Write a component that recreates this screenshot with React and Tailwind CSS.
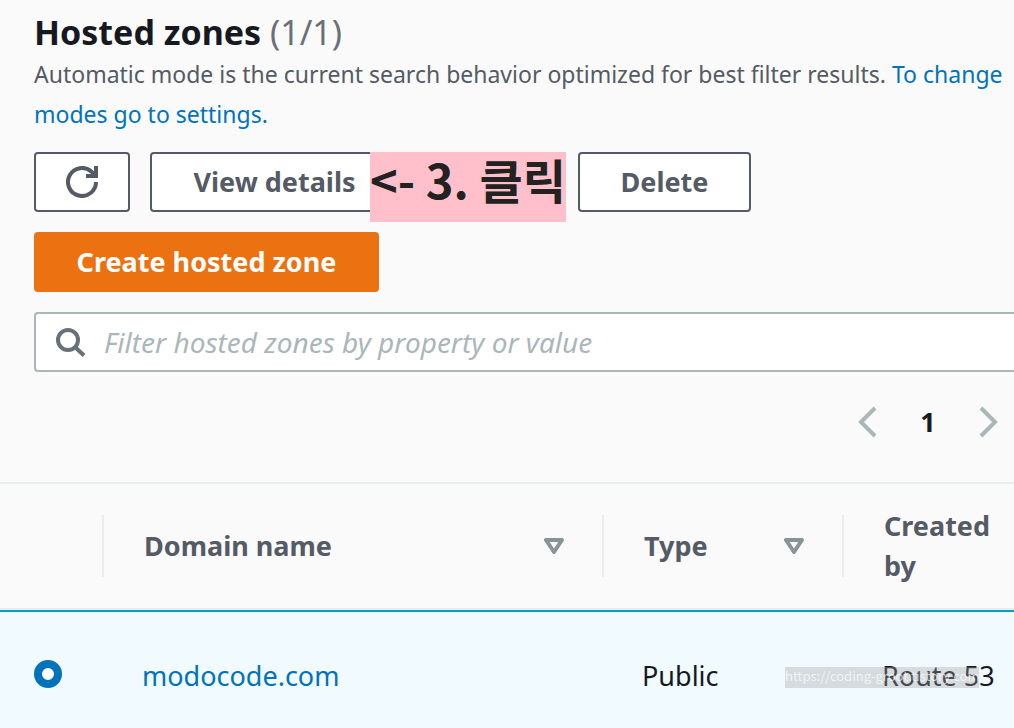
import { useState } from 'react';

const ZONES = [{ name: 'modocode.com', type: 'Public', createdBy: 'Route 53' }];

const BUTTON = 'h-[60px] shrink-0 rounded border-2 border-[#545b64] bg-white text-[27px] font-bold text-[#545b64]';

function RefreshIcon() {
  return (
    <svg className="mx-auto h-8 w-8" viewBox="0 0 32 32" fill="none" stroke="currentColor" strokeWidth="4" aria-hidden="true">
      <path d="M30 16a14 14 0 1 1-4.500-10.300l3 3" />
      <path d="M20 10h10V0" />
    </svg>
  );
}

function SearchIcon() {
  return (
    <svg className="h-8 w-8 shrink-0 text-[#687078]" viewBox="0 0 32 32" fill="none" stroke="currentColor" strokeWidth="4" aria-hidden="true">
      <circle cx="14" cy="14" r="10" />
      <path d="M21 21l9 8.500" />
    </svg>
  );
}

function Chevron({ d }) {
  return (
    <svg className="h-8 w-5" viewBox="0 0 20 32" fill="none" stroke="#aab7b8" strokeWidth="4" aria-hidden="true">
      <path d={d} />
    </svg>
  );
}

function SortIcon() {
  return (
    <svg className="h-4 w-5" viewBox="0 0 20 16" fill="none" stroke="#879596" strokeWidth="4" strokeLinejoin="round" aria-hidden="true">
      <path d="M2 2h16l-8 12z" />
    </svg>
  );
}

function HeaderCell({ label, sortable }) {
  return (
    <th scope="col" className="border-b-2 border-[#eaeded] p-0 text-left font-bold">
      <div className="flex h-[62px] items-center justify-between border-l-2 border-[#eaeded] pr-[38px] pl-10">
        <span>{label}</span>
        {sortable && (
          <button type="button" aria-label={`Sort by ${label}`}>
            <SortIcon />
          </button>
        )}
      </div>
    </th>
  );
}

export default function App() {
  const [filter, setFilter] = useState('');
  const [selected, setSelected] = useState('modocode.com');

  return (
    <div className="min-h-screen overflow-hidden bg-[#fafafa] font-['Noto_Sans',sans-serif] text-[#16191f]">
      <header className="pl-[34px]">
        <h1 className="pt-[10px] text-[34px] leading-[44px] font-bold">
          Hosted zones <span className="font-normal text-[#687078]">(1/1)</span>
        </h1>
        <p className="text-[23px] leading-10 text-[#545b64]">
          Automatic mode is the current search behavior optimized for best filter results.{' '}
          <a href="#settings" className="text-[#0073bb]">To change modes go to settings.</a>
        </p>

        <div className="mt-[18px] flex gap-5">
          <button type="button" aria-label="Refresh" className={`${BUTTON} w-24`}>
            <RefreshIcon />
          </button>
          <button type="button" className={`${BUTTON} w-[249px]`}>View details</button>
          <div className="relative w-[139px] shrink-0">
            <div className="absolute top-0 -left-[49px] h-[70px] w-[196px] bg-[#ffc0cb] font-['Noto_Sans_CJK_KR',sans-serif] text-[47px] leading-[54px] font-bold whitespace-nowrap text-[#222]">
              &lt;- 3. 클릭
            </div>
          </div>
          <button type="button" className={`${BUTTON} w-[173px]`}>Delete</button>
        </div>
        <button type="button" className="mt-5 h-[60px] w-[345px] rounded bg-[#ec7211] text-[27px] font-bold text-white">
          Create hosted zone
        </button>

        <label className="mt-5 flex h-[60px] items-center gap-[18px] rounded-l border-2 border-r-0 border-[#aab7b8] bg-white pl-[18px]">
          <SearchIcon />
          <input
            type="text"
            aria-label="Filter hosted zones"
            value={filter}
            onChange={(e) => setFilter(e.target.value)}
            placeholder="Filter hosted zones by property or value"
            className="min-w-0 flex-1 text-[28px] outline-none placeholder:text-[#aab7b8] placeholder:italic"
          />
        </label>
      </header>

      <nav aria-label="Pagination" className="flex h-[110px] items-center justify-end gap-10 pr-4 pb-[10px]">
        <button type="button" aria-label="Previous page"><Chevron d="M17 2L3 16l14 14" /></button>
        <button type="button" aria-current="page" className="w-5 text-[27px] font-bold">1</button>
        <button type="button" aria-label="Next page"><Chevron d="M3 2l14 14L3 30" /></button>
      </nav>

      <table className="w-full table-fixed border-separate border-spacing-0 border-t-2 border-[#eaeded] text-[27px] leading-10">
        <colgroup>
          <col className="w-[102px]" />
          <col />
          <col className="w-60" />
          <col className="w-[172px]" />
        </colgroup>
        <thead>
          <tr className="h-[126px] text-[#545b64]">
            <td className="border-b-2 border-[#eaeded]" />
            <HeaderCell label="Domain name" sortable />
            <HeaderCell label="Type" sortable />
            <HeaderCell label="Created by" />
          </tr>
        </thead>
        <tbody>
          {ZONES.map((zone) => (
            <tr key={zone.name} className="h-[130px] bg-[#f1faff] *:border-t-2 *:border-[#00a1c9]">
              <td className="pb-1 pl-[34px]">
                <input
                  type="radio"
                  name="zone"
                  aria-label={zone.name}
                  checked={selected === zone.name}
                  onChange={() => setSelected(zone.name)}
                  className="block h-7 w-7 appearance-none rounded-full border-2 border-[#879596] bg-white checked:border-8 checked:border-[#0073bb]"
                />
              </td>
              <td className="pl-10"><a href="#zone" className="text-[#0073bb]">{zone.name}</a></td>
              <td className="pl-10">{zone.type}</td>
              <td className="relative pl-10 whitespace-nowrap">
                {zone.createdBy}
                <span className="absolute top-[55px] -left-[57px] h-[21px] bg-[#a0a0a0]/35 font-['Noto_Sans_CJK_KR',sans-serif] text-[13px] leading-[18px] text-white/70">
                  https://coding-groot.tistory.com
                </span>
              </td>
            </tr>
          ))}
        </tbody>
      </table>
    </div>
  );
}
